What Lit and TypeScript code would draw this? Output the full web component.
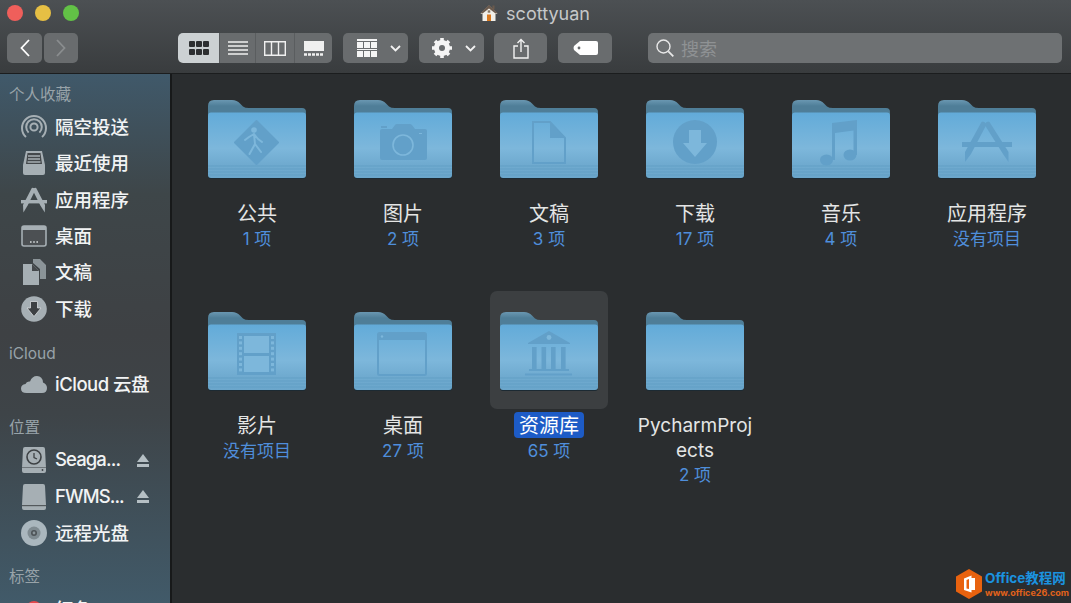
import { LitElement, html, css, svg } from 'lit';
import { customElement } from 'lit/decorators.js';

const MARK = '#62a0c9';
const LIGHT = '#7db7db';

const marks: Record<string, unknown> = {
  public: svg`
    <path d="M48.5 21 L70 42.5 L48.5 64 L27 42.5 Z" fill="${MARK}" stroke="${MARK}" stroke-width="2" stroke-linejoin="round"/>
    <circle cx="46" cy="30" r="2.8" fill="${LIGHT}"/>
    <path d="M46 34 L47 44 L41.5 54 M47 44 L53 52 M37 40 L41 37 L46 34 L50 39 L54 42" fill="none" stroke="${LIGHT}" stroke-width="2" stroke-linecap="round" stroke-linejoin="round"/>`,
  camera: svg`
    <path d="M26 31 Q26 29 28 29 H38 L41 25 Q41.5 24 43 24 H56 Q57 24 58 25 L61 29 H71 Q73 29 73 31 V58 Q73 60 71 60 H28 Q26 60 26 58 Z" fill="${MARK}"/>
    <rect x="27" y="26" width="6" height="2" fill="${MARK}"/>
    <circle cx="49" cy="45" r="10" fill="${MARK}" stroke="${LIGHT}" stroke-width="1.6"/>
    <rect x="65" y="33" width="3" height="1" fill="${LIGHT}"/>`,
  doc: svg`
    <path d="M33 22 H50 L65 38 V63 H33 Z" fill="none" stroke="${MARK}" stroke-width="2"/>
    <path d="M50 22 L65 38 H50 Z" fill="${MARK}"/>`,
  download: svg`
    <circle cx="49" cy="42" r="22" fill="${MARK}"/>
    <path d="M43 30 H55 V43 H61 L49 57 L37 43 H43 Z" fill="${LIGHT}"/>`,
  music: svg`
    <path d="M40 23 L65 20 V55 H61.5 V30.5 L43 33 V60 H40 Z" fill="${MARK}"/>
    <ellipse cx="34.5" cy="60" rx="6.5" ry="5.5" fill="${MARK}"/>
    <ellipse cx="58" cy="55" rx="6.5" ry="5.5" fill="${MARK}"/>`,
  apps: svg`
    <rect x="24" y="42" width="50" height="5" fill="${MARK}"/>
    <path d="M43.5 22 Q46 20.5 48.5 24.5 L33 54 L27 62 L27 52 Z" fill="${MARK}"/>
    <path d="M51.5 22 Q49 20.5 46.5 24.5 L65 54 L70.5 62 L70.5 52 Z" fill="${MARK}"/>`,
  film: svg`
    <rect x="29" y="21" width="39" height="42" fill="${MARK}"/>
    <rect x="36" y="24" width="25" height="17" fill="${LIGHT}"/>
    <rect x="36" y="44" width="25" height="16" fill="${LIGHT}"/>
    ${[0, 1, 2, 3, 4, 5, 6].map(
      (i) => svg`
        <rect x="31" y="${24 + i * 5.4}" width="3" height="3" fill="${LIGHT}"/>
        <rect x="63" y="${24 + i * 5.4}" width="3" height="3" fill="${LIGHT}"/>`
    )}`,
  window: svg`
    <rect x="24" y="21" width="48" height="42" rx="1.5" fill="none" stroke="${MARK}" stroke-width="2"/>
    <rect x="24" y="21" width="48" height="7" fill="${MARK}"/>
    <circle cx="28" cy="24.5" r="1.2" fill="${LIGHT}"/>`,
  library: svg`
    <path d="M49 19 L70 31 V32 H28 V31 Z" fill="${MARK}"/>
    <circle cx="49" cy="25.5" r="2.4" fill="${LIGHT}"/>
    ${[32, 41.5, 51, 61].map((x) => svg`<rect x="${x}" y="35" width="4.6" height="22" fill="${MARK}"/>`)}
    <rect x="29" y="57" width="40" height="2" fill="${MARK}"/>
    <rect x="25" y="61.5" width="47" height="2" fill="${MARK}"/>`,
  none: svg``
};

const folderIcon = (id: number, mark: string) => html`
  <svg class="folder" width="98" height="79" viewBox="0 0 98 79">
    <defs>
      <linearGradient id="back${id}" x1="0" y1="0" x2="0" y2="1">
        <stop offset="0" stop-color="#6a97b1"/>
        <stop offset="0.2" stop-color="#4f7e98"/>
      </linearGradient>
      <linearGradient id="front${id}" x1="0" y1="0" x2="0" y2="1">
        <stop offset="0" stop-color="#62abd9"/>
        <stop offset="0.55" stop-color="#7db7db"/>
        <stop offset="0.78" stop-color="#70abd0"/>
        <stop offset="1" stop-color="#6ba6cb"/>
      </linearGradient>
    </defs>
    <path d="M0 30 V6 Q0 0 6 0 H24 Q29 0 32 3.5 L35 6.5 Q37 8 41 8 H94 Q98 8 98 12 V30 Z" fill="url(#back${id})"/>
    <rect x="0" y="14" width="98" height="65" rx="3" fill="#1c2a33"/>
    <rect x="0" y="12.5" width="98" height="65.5" rx="3" fill="url(#front${id})"/>
    <path d="M0 66 H98 M0 69 H98 M0 72 H98 M0 75 H98" stroke="#5f9dc3" stroke-width="1" opacity="0.75"/>
    ${marks[mark]}
  </svg>
`;

const SIDE = '#a6afb4';
const sideIcons: Record<string, unknown> = {
  airdrop: html`<svg width="28" height="28" viewBox="0 0 28 28" fill="none" stroke="${SIDE}" stroke-width="2">
    <path d="M6 24 A12 12 0 1 1 22 24"/><path d="M8.6 19.6 A7.8 7.8 0 1 1 19.4 19.6"/>
    <circle cx="14" cy="14" r="3.6"/></svg>`,
  recents: html`<svg width="28" height="28" viewBox="0 0 28 28">
    <path d="M6 2 H22 L25 16 V24 Q25 26 23 26 H5 Q3 26 3 24 V16 Z" fill="${SIDE}"/>
    <path d="M7.5 4 H20.5 L22 15 H6 Z" fill="#44484b"/>
    <path d="M8 7 H20 M8 10 H20 M7.5 13 H20.5" stroke="${SIDE}" stroke-width="1.4"/></svg>`,
  apps: html`<svg width="28" height="28" viewBox="0 0 28 28" fill="${SIDE}">
    <rect x="1" y="14" width="26" height="3.4"/>
    <path d="M11.8 2 Q13.5 1 15.6 3.6 L7.6 19.5 L3.4 26.5 L3 19 Z"/>
    <path d="M16.2 2 Q14.5 1 12.4 3.6 L20.4 19.5 L24.8 26.5 L25 19 Z"/></svg>`,
  desktop: html`<svg width="28" height="28" viewBox="0 0 28 28">
    <rect x="2" y="4" width="24" height="20" rx="2" fill="#4c5053" stroke="${SIDE}" stroke-width="1.6"/>
    <rect x="2" y="4" width="24" height="4" fill="${SIDE}"/>
    <path d="M10 20 H11.6 M13.2 20 H14.8 M16.4 20 H18" stroke="#d5dadc" stroke-width="1.6"/></svg>`,
  docs: html`<svg width="28" height="28" viewBox="0 0 28 28" fill="${SIDE}">
    <path d="M13 1 H20 L26 7 V21 H20 V11 L13 5 Z" opacity="0.75"/>
    <path d="M3 6 H12 L19 13 V27 H3 Z"/>
    <path d="M12 6 L19 13 H12 Z" fill="#44484b"/></svg>`,
  download: html`<svg width="28" height="28" viewBox="0 0 28 28">
    <circle cx="14" cy="14" r="12.8" fill="${SIDE}"/>
    <path d="M10.5 6.5 H17.5 V13 H21 L14 21.5 L7 13 H10.5 Z" fill="#3d4043" stroke="#d7dbdd" stroke-width="0.8"/></svg>`,
  cloud: html`<svg width="28" height="28" viewBox="0 0 28 28">
    <path d="M6.5 23 Q1 23 1 18.5 Q1 14.5 5.5 14 Q6.5 11 10 11.5 Q12 6 17 6 Q22.5 6 23 12.5 Q27 14 27 18 Q27 23 22 23 Z" fill="${SIDE}"/></svg>`,
  timemachine: html`<svg width="28" height="28" viewBox="0 0 28 28">
    <path d="M5 1 H23 Q25 1 25 3 L26 22 V25 Q26 27 24 27 H4 Q2 27 2 25 V22 L3 3 Q3 1 5 1 Z" fill="${SIDE}"/>
    <rect x="2" y="21" width="24" height="1" fill="#6f767a"/>
    <circle cx="14" cy="11" r="7" fill="none" stroke="#3d4144" stroke-width="1.6"/>
    <path d="M14 7 V11.5 L17 13" fill="none" stroke="#3d4144" stroke-width="1.3"/>
    <circle cx="22.5" cy="24" r="0.9" fill="#3d4144"/></svg>`,
  disk: html`<svg width="28" height="28" viewBox="0 0 28 28">
    <path d="M5 1 H23 Q25 1 25 3 L26 22 V25 Q26 27 24 27 H4 Q2 27 2 25 V22 L3 3 Q3 1 5 1 Z" fill="${SIDE}"/>
    <rect x="2" y="22" width="24" height="1.2" fill="#54595c"/></svg>`,
  cd: html`<svg width="28" height="28" viewBox="0 0 28 28">
    <circle cx="14" cy="14" r="13" fill="#aab7be"/>
    <circle cx="14" cy="14" r="6.5" fill="#7f8b91"/>
    <circle cx="14" cy="14" r="3" fill="#4d5357"/>
    <circle cx="14" cy="14" r="1.4" fill="#8b969b"/></svg>`
};

const folders = [
  { name: '公共', sub: '1 项', mark: 'public' },
  { name: '图片', sub: '2 项', mark: 'camera' },
  { name: '文稿', sub: '3 项', mark: 'doc' },
  { name: '下载', sub: '17 项', mark: 'download' },
  { name: '音乐', sub: '4 项', mark: 'music' },
  { name: '应用程序', sub: '没有项目', mark: 'apps' },
  { name: '影片', sub: '没有项目', mark: 'film' },
  { name: '桌面', sub: '27 项', mark: 'window' },
  { name: '资源库', sub: '65 项', mark: 'library', selected: true },
  { name: 'PycharmProjects', sub: '2 项', mark: 'none', latin: true }
];

const sections = [
  {
    title: '个人收藏',
    items: [
      { label: '隔空投送', icon: 'airdrop' },
      { label: '最近使用', icon: 'recents' },
      { label: '应用程序', icon: 'apps' },
      { label: '桌面', icon: 'desktop' },
      { label: '文稿', icon: 'docs' },
      { label: '下载', icon: 'download' }
    ]
  },
  { title: 'iCloud', items: [{ label: 'iCloud 云盘', icon: 'cloud', fit: 'tight' }] },
  {
    title: '位置',
    items: [
      { label: 'Seaga...', icon: 'timemachine', eject: true, fit: 'tighter' },
      { label: 'FWMS...', icon: 'disk', eject: true, fit: 'tighter' },
      { label: '远程光盘', icon: 'cd' }
    ]
  },
  { title: '标签', items: [{ label: '红色', dot: '#e5484d' }] }
];

@customElement('app-root')
export class AppRoot extends LitElement {
  static styles = css`
    :host {
      display: block;
      width: 1071px;
      height: 603px;
      overflow: hidden;
      position: relative;
      background: #2a2d2f;
      font-family: Inter, 'Noto Sans CJK SC', sans-serif;
    }
    svg {
      display: block;
      flex: none;
    }
    .top {
      box-sizing: border-box;
      background: linear-gradient(#4c5053, #393c3e);
      border-bottom: 1px solid #1b1d1e;
      height: 74px;
    }
    .titlebar {
      height: 33px;
      display: grid;
      grid-template-columns: 1fr auto 1fr;
      align-items: start;
    }
    .lights {
      display: flex;
      gap: 12px;
      padding: 5px 0 0 7px;
    }
    .lights i {
      width: 16px;
      height: 16px;
      border-radius: 50%;
    }
    .title {
      display: flex;
      align-items: center;
      gap: 8px;
      height: 26px;
      margin-left: -1px;
      color: #c6c8c9;
      font-size: 18px;
    }
    .tools {
      display: flex;
      align-items: stretch;
      height: 30px;
      padding: 0 9px 0 7px;
    }
    .btn {
      display: flex;
      align-items: center;
      justify-content: center;
      background: #696c6e;
      border-radius: 5px;
    }
    .back { width: 35px; margin-right: 2px; }
    .forward { width: 34px; margin-right: 100px; }
    .views {
      display: flex;
      width: 154px;
      border-radius: 5px;
      overflow: hidden;
      margin-right: 11px;
    }
    .views .btn {
      border-radius: 0;
      border-left: 1px solid #5a5d5f;
      box-sizing: border-box;
    }
    .views .on {
      background: #ccd1d3;
      border-left: 0;
    }
    .menu {
      width: 65px;
      box-sizing: border-box;
      justify-content: flex-start;
      padding-left: 14px;
      gap: 13px;
      margin-right: 11px;
    }
    .menu + .menu { margin-right: 10px; padding-left: 13px; }
    .share { width: 53px; margin-right: 11px; }
    .tag { width: 54px; margin-right: 36px; }
    .search {
      flex: 1;
      display: flex;
      align-items: center;
      gap: 7px;
      padding-left: 8px;
      background: #6e7173;
      border-radius: 5px;
      color: #8f9294;
      font-size: 18px;
    }
    .body {
      display: flex;
      height: 529px;
    }
    .side {
      width: 172px;
      flex: none;
      box-sizing: border-box;
      border-right: 2px solid #17191a;
      background: linear-gradient(#40596a 0, #3e4649 120px, #3e4144 260px, #3e4448 340px, #415a69 529px);
      overflow: hidden;
      padding-top: 5px;
    }
    .group { margin-bottom: 10px; }
    .group:first-child { margin-bottom: 11px; }
    .group:nth-child(2) .head { margin-bottom: -2px; }
    .head {
      height: 30px;
      line-height: 32px;
      padding-left: 9px;
      font-size: 15.5px;
      color: #98a3a9;
    }
    .row {
      height: 36.3px;
      display: flex;
      align-items: center;
      padding-left: 20px;
      color: #f1f3f4;
      font-size: 18.5px;
      font-weight: 500;
      white-space: nowrap;
    }
    .row .ic {
      width: 27px;
      margin-right: 8px;
      display: flex;
      justify-content: center;
    }
    .row .lbl { flex: 1; padding-bottom: 2px; }
    .row .tight { letter-spacing: -0.5px; }
    .row .tighter { letter-spacing: -0.9px; }
    .row .ej { margin-right: 21px; }
    .dot {
      width: 16px;
      height: 16px;
      border-radius: 50%;
    }
    .grid {
      flex: 1;
      display: grid;
      grid-template-columns: repeat(6, 146px);
      grid-auto-rows: 212px;
      padding: 5px 0 0 12px;
    }
    .cell {
      display: flex;
      flex-direction: column;
      align-items: center;
    }
    .tile {
      width: 118px;
      height: 118px;
      box-sizing: border-box;
      padding-top: 21px;
      display: flex;
      justify-content: center;
      border-radius: 7px;
    }
    .tile.on { background: #3c3f41; }
    .name {
      width: 118px;
      margin-top: 3px;
      padding-top: 2px;
      text-align: center;
      color: #e4e5e5;
      font-size: 20px;
      line-height: 24.5px;
      overflow-wrap: anywhere;
    }
    .name.latin { font-size: 19px; }
    .name span.on {
      display: inline-block;
      margin-top: -2px;
      padding: 2px 5px 0;
      line-height: 24px;
      background: #1d5bc6;
      border-radius: 4px;
      color: #fff;
    }
    .sub {
      color: #4f8edb;
      font-size: 17px;
      line-height: 24px;
    }
    .mark {
      position: absolute;
      left: 956px;
      top: 569px;
      display: flex;
      gap: 3px;
      align-items: center;
    }
    .mark b {
      display: block;
      color: #1b93e0;
      font-size: 13.5px;
      line-height: 17px;
      white-space: nowrap;
    }
    .mark small {
      display: block;
      color: #e2621a;
      font-size: 9px;
      font-weight: 700;
      line-height: 11px;
      white-space: nowrap;
    }
  `;

  render() {
    return html`
      <div class="top">
        <div class="titlebar">
          <div class="lights">
            <i style="background:#ef5f5b"></i>
            <i style="background:#e6bf44"></i>
            <i style="background:#62c146"></i>
          </div>
          <div class="title">
            <svg width="18" height="18" viewBox="0 0 18 18">
              <path d="M9 1.5 L17.5 9.5 L15.5 10 V17 H2.5 V10 L0.5 9.5 Z" fill="#f2efe8"/>
              <path d="M9 1 L17.5 9 L15.5 9.5 L9 4.5 L2.5 9.5 L0.5 9 Z" fill="#6b5a4d"/>
              <rect x="12.5" y="1.5" width="2" height="4" fill="#6b5a4d"/>
              <rect x="7" y="10.5" width="4" height="6.5" fill="#d9791f"/>
              <rect x="7.7" y="6.3" width="2.6" height="2.4" fill="#8a7a68"/>
            </svg>
            scottyuan
          </div>
          <div></div>
        </div>
        ${this._renderTools()}
      </div>
      <div class="body">
        <div class="side">${sections.map((s) => this._renderSection(s))}</div>
        <div class="grid">
          ${folders.map(
            (f, i) => html`
              <div class="cell">
                <div class="tile ${f.selected ? 'on' : ''}">${folderIcon(i, f.mark)}</div>
                <div class="name ${f.latin ? 'latin' : ''}"><span class="${f.selected ? 'on' : ''}">${f.name}</span></div>
                <div class="sub">${f.sub}</div>
              </div>
            `
          )}
        </div>
      </div>
      <div class="mark">
        <svg width="26" height="30" viewBox="0 0 26 30">
          <path d="M13 0 L26 7.5 V22.5 L13 30 L0 22.5 V7.5 Z" fill="#e8620f"/>
          <path d="M15.5 6.5 V23.5 L8 21 V9.5 Z M13 10 L10.5 11 V19.5 L13 20 Z M15.5 9 H19 V21 H15.5 Z" fill="#fff" fill-rule="evenodd"/>
        </svg>
        <div>
          <b>Office教程网</b>
          <small>www.office26.com</small>
        </div>
      </div>
    `;
  }

  _renderTools() {
    const chevron = html`<svg width="11" height="7" viewBox="0 0 11 7"><path d="M1 1 L5.5 5.5 L10 1" fill="none" stroke="#f2f2f2" stroke-width="1.8"/></svg>`;
    return html`
      <div class="tools">
        <div class="btn back">
          <svg width="10" height="18" viewBox="0 0 10 18"><path d="M9 1 L1.5 9 L9 17" fill="none" stroke="#fff" stroke-width="1.8"/></svg>
        </div>
        <div class="btn forward">
          <svg width="10" height="18" viewBox="0 0 10 18"><path d="M1 1 L8.5 9 L1 17" fill="none" stroke="#8a8d8f" stroke-width="1.8"/></svg>
        </div>
        <div class="views">
          <div class="btn on" style="width:41px">
            <svg width="20" height="14" viewBox="0 0 20 14" fill="#2d2f31">
              ${[0, 7, 14].map((x) => svg`<rect x="${x}" y="0" width="6" height="6" rx="1"/><rect x="${x}" y="8" width="6" height="6" rx="1"/>`)}
            </svg>
          </div>
          <div class="btn" style="width:36px">
            <svg width="20" height="14" viewBox="0 0 20 14"><path d="M0 1 H20 M0 5 H20 M0 9 H20 M0 13 H20" stroke="#f0f0f0" stroke-width="1.4"/></svg>
          </div>
          <div class="btn" style="width:39px">
            <svg width="22" height="15" viewBox="0 0 22 15"><path d="M.7 .7 H21.3 V14.3 H.7 Z M7.5 .7 V14.3 M14.5 .7 V14.3" fill="none" stroke="#f0f0f0" stroke-width="1.4"/></svg>
          </div>
          <div class="btn" style="width:38px">
            <svg width="20" height="15" viewBox="0 0 20 15"><rect x="0" y="0" width="20" height="10" fill="#f0f0f0"/><path d="M0 13.5 H20" stroke="#f0f0f0" stroke-width="2.4" stroke-dasharray="3 1"/></svg>
          </div>
        </div>
        <div class="btn menu">
          <svg width="20" height="19" viewBox="0 0 20 19" fill="#f5f5f5">
            <rect x="0" y="0" width="20" height="2"/>
            ${[0, 7, 14].map((x) => svg`<rect x="${x}" y="3" width="6" height="6"/><rect x="${x}" y="12" width="6" height="6"/>`)}
            <rect x="0" y="10" width="20" height="1"/>
          </svg>
          ${chevron}
        </div>
        <div class="btn menu">
          <svg width="20" height="20" viewBox="0 0 20 20">
            <circle cx="10" cy="10" r="5.4" fill="none" stroke="#f5f5f5" stroke-width="5.2"/>
            <path d="M10 0 V20 M0 10 H20 M3 3 L17 17 M17 3 L3 17" stroke="#f5f5f5" stroke-width="3.6"/>
            <circle cx="10" cy="10" r="3" fill="#696c6e"/>
          </svg>
          ${chevron}
        </div>
        <div class="btn share">
          <svg width="16" height="21" viewBox="0 0 16 21" fill="none" stroke="#f2f2f2" stroke-width="1.4">
            <path d="M5 8 H1 V20 H15 V8 H11 M8 14 V1.5 M4.5 5 L8 1.5 L11.5 5"/>
          </svg>
        </div>
        <div class="btn tag">
          <svg width="25" height="14" viewBox="0 0 25 14">
            <path d="M7 0 H23 Q25 0 25 2 V12 Q25 14 23 14 H7 L1 9 Q0 7 1 5 Z" fill="#fff"/>
            <circle cx="6" cy="7" r="1.4" fill="#696c6e"/>
          </svg>
        </div>
        <div class="search">
          <svg width="18" height="18" viewBox="0 0 18 18" fill="none" stroke="#e8e8e8" stroke-width="1.4">
            <circle cx="7.5" cy="7.5" r="6.5"/><path d="M12.3 12.3 L17.3 17.3" stroke-width="1.8"/>
          </svg>
          搜索
        </div>
      </div>
    `;
  }

  _renderSection(section: { title: string; items: any[] }) {
    return html`
      <div class="group">
        <div class="head">${section.title}</div>
        ${section.items.map(
          (item) => html`
            <div class="row">
              <span class="ic">
                ${item.dot ? html`<span class="dot" style="background:${item.dot}"></span>` : sideIcons[item.icon]}
              </span>
              <span class="lbl ${item.fit || ''}">${item.label}</span>
              ${item.eject
                ? html`<svg class="ej" width="12" height="13" viewBox="0 0 12 13" fill="#b5bfc4">
                    <path d="M6 0 L12 8 H0 Z"/><rect x="0" y="10" width="12" height="3"/>
                  </svg>`
                : ''}
            </div>
          `
        )}
      </div>
    `;
  }
}
